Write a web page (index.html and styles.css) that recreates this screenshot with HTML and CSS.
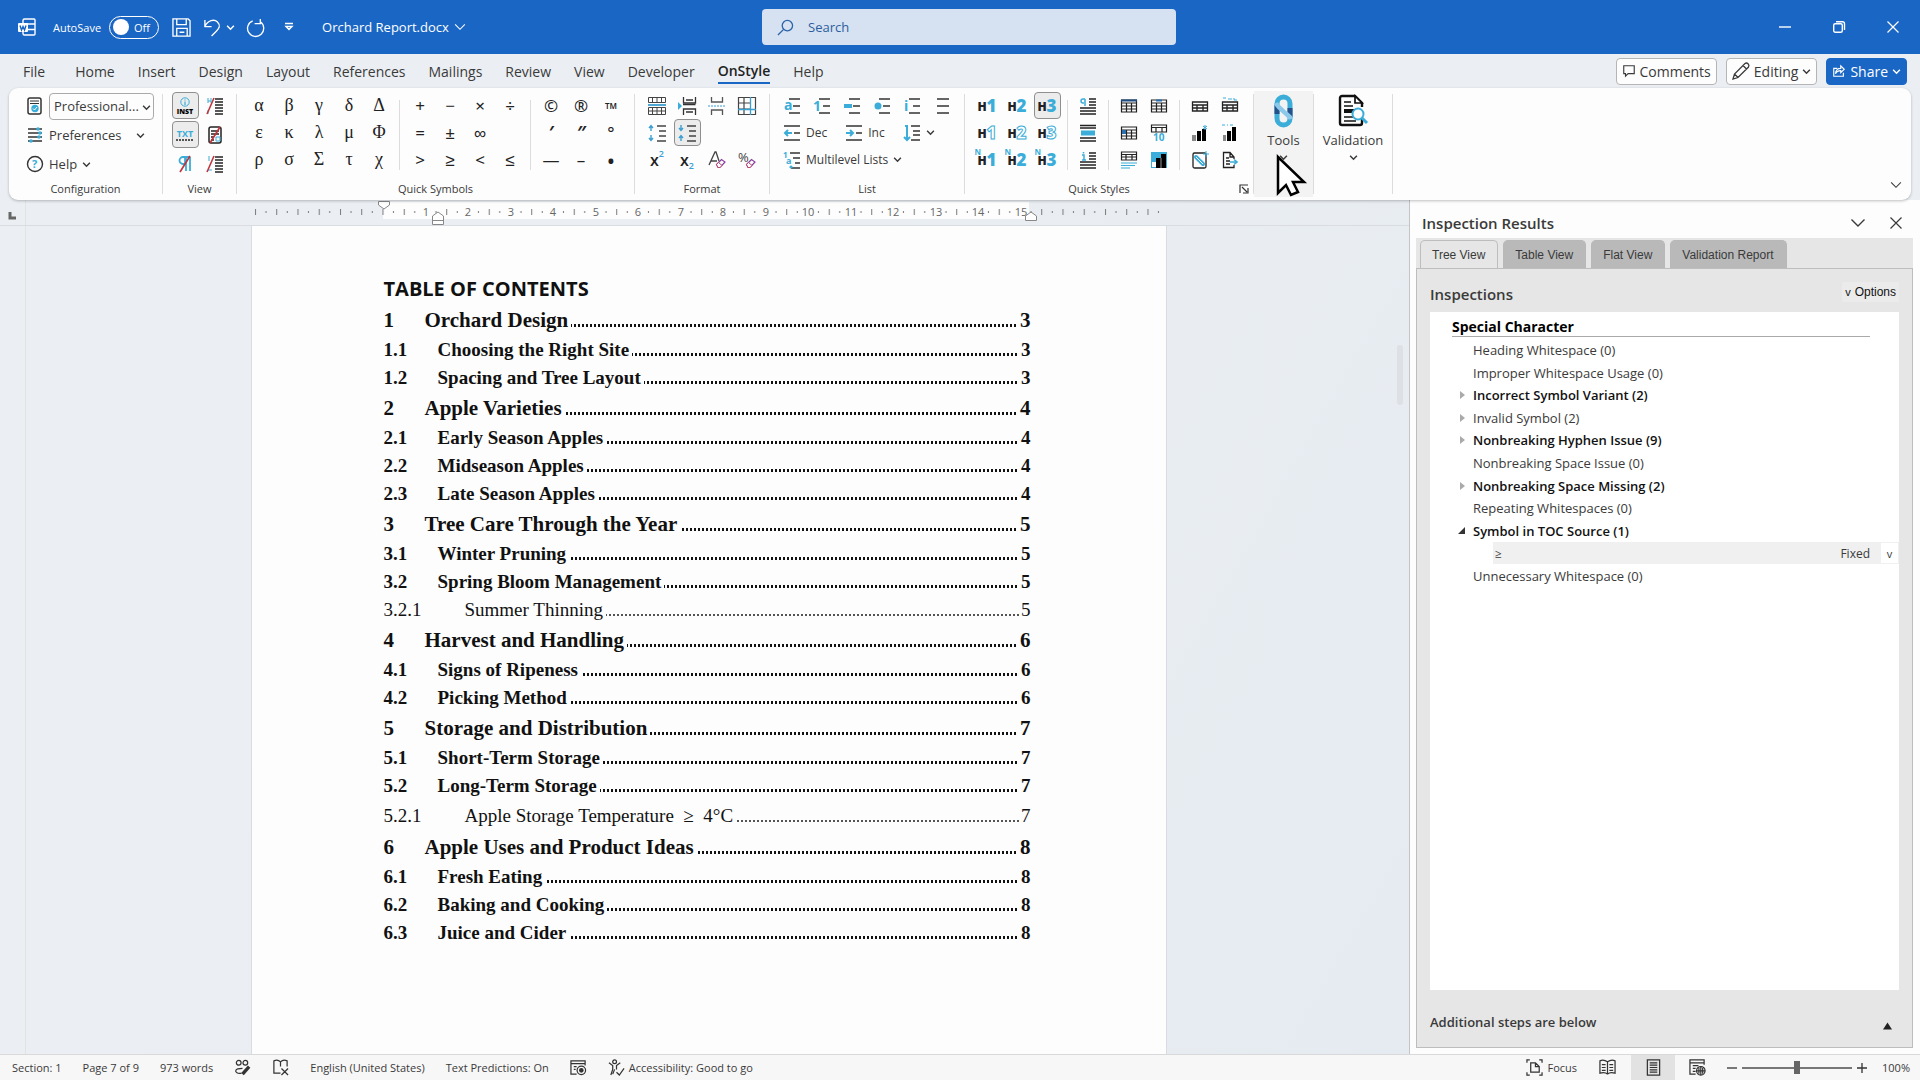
FILE: index.html
```
<!DOCTYPE html>
<html lang="en">

<head>
    <meta charset="UTF-8">
    <meta name="viewport" content="width=device-width, initial-scale=1.0">
    <title>Orchard Report.docx</title>
    <link rel="stylesheet" href="styles.css">
</head>

<body>
    <!-- shared icons -->
    <svg class="defs" aria-hidden="true">
        <symbol id="chev" viewBox="0 0 8 8"><path d="M1 2.5l3 3 3-3" fill="none" stroke="currentColor" stroke-width="1.3"/></symbol>
        <symbol id="chev-lg" viewBox="0 0 16 16"><path d="M1.500 4.500l6.500 6.500 6.500-6.500" fill="none" stroke="currentColor" stroke-width="1.400"/></symbol>
        <symbol id="close" viewBox="0 0 12 12"><path d="M.5.5l11 11M11.500.5l-11 11" fill="none" stroke="currentColor" stroke-width="1.200"/></symbol>
        <symbol id="para-lines" viewBox="0 0 18 18"><path d="M9 2h8M9 5h8M9 8h8M9 11h8M9 14h8M9 17h8" stroke="#222" stroke-width="1.500"/></symbol>
        <symbol id="list-lines" viewBox="0 0 18 18"><path d="M6 2h11M10 9h7M6 16h11" stroke="#333" stroke-width="1.500"/></symbol>
        <symbol id="tbl" viewBox="0 0 18 18"><path d="M1.500 3h15v12h-15zM1.500 6h15M1.500 9h15M1.500 12h15M6.500 6v9M11.500 6v9" fill="none" stroke="#222" stroke-width="1.200"/></symbol>
        <symbol id="eraser" viewBox="0 0 18 18"><path d="M8.500 13.500l5-5 3.500 2.500-5 5.500H10z" fill="#fff" stroke="#8a3f9e" stroke-width="1.200"/><path d="M8.500 13.500L10 16.500h2l2-2-3.500-3z" fill="#fff" stroke="#c0456b"/></symbol>
    </svg>

    <header class="titlebar">
        <div class="quick-access">
            <svg class="word" viewBox="0 0 18 18" fill="none" stroke="#fff" stroke-width="1.300"><path d="M5 5V2.500A1.500 1.500 0 016.500 1H16a1 1 0 011 1v14a1 1 0 01-1 1H6.500A1.500 1.500 0 015 15.500V14M8 6h9M10 11.500h7"/><rect x="0" y="5" width="10" height="9" rx="1" fill="#fff" stroke="none"/><path d="M2 7.500l1.500 4.500L5 8.500 6.500 12 8 7.500" fill="none" stroke="#1a66c4"/></svg>
            <label class="autosave">AutoSave
                <span class="toggle"><input type="checkbox"><i></i><span>Off</span></span>
            </label>
            <button class="tb-btn" aria-label="Save"><svg viewBox="0 0 20 20"><path d="M1 1h16l2 2v16H1zM5 1v6h10V1M5 19v-8h11v8M8 15h5"/></svg></button>
            <button class="tb-btn undo" aria-label="Undo"><svg viewBox="0 0 20 20"><path d="M2 2v7h7M2 9c3-7 10-8 13-5 4 4 2 7-1 10l-5 5"/></svg><svg class="c8"><use href="#chev"/></svg></button>
            <button class="tb-btn" aria-label="Redo"><svg viewBox="0 0 20 20"><path d="M14 1v5h-6M14 4a8.500 8.500 0 11-8-1"/></svg></button>
            <button class="tb-btn customize" aria-label="Customize"><svg viewBox="0 0 10 10"><path d="M1 1.500h8M2 4.500l3 3 3-3z"/></svg></button>
            <button class="doc-name">Orchard Report.docx <svg class="c12"><use href="#chev-lg"/></svg></button>
        </div>
        <div class="search">
            <svg viewBox="0 0 18 18"><circle cx="11" cy="7" r="5.500"/><path d="M7 11L1 17"/></svg>
            <input type="text" placeholder="Search" aria-label="Search">
        </div>
        <div class="window-btns">
            <button aria-label="Minimize"><svg viewBox="0 0 12 12"><path d="M0 6h12"/></svg></button>
            <button aria-label="Restore"><svg viewBox="0 0 12 12"><rect x=".7" y="2.700" width="8.600" height="8.600" rx="1.500"/><path d="M3 .7h6.500a2 2 0 012 2V9"/></svg></button>
            <button aria-label="Close"><svg><use href="#close"/></svg></button>
        </div>
    </header>

    <nav class="tabs">
        <button class="file">File</button>
        <button>Home</button>
        <button>Insert</button>
        <button>Design</button>
        <button>Layout</button>
        <button>References</button>
        <button>Mailings</button>
        <button>Review</button>
        <button>View</button>
        <button>Developer</button>
        <button class="active">OnStyle</button>
        <button>Help</button>
        <div class="tab-actions">
            <button class="pill"><svg viewBox="0 0 16 16"><path d="M2 2h12v9H7l-3 3v-3H2z"/></svg>Comments</button>
            <button class="pill"><svg class="pen" viewBox="0 0 18 18"><path d="M1 17l1.500-5L13 1.500c2-1.500 5 1 3.500 3.500L6 15.500zM11 3.500L14.500 7M2.500 12L6 15.500"/></svg>Editing <svg class="c8"><use href="#chev"/></svg></button>
            <button class="pill share"><svg viewBox="0 0 16 16"><path d="M6 5H2v9h11v-4M4 11c0-4 3-6 6-6V2l4 4-4 4V7.500C7 7.500 5 9 4 11z"/></svg>Share <svg class="c8"><use href="#chev"/></svg></button>
        </div>
    </nav>

    <section class="ribbon">
        <div class="group config">
            <div class="body">
                <div class="line"><svg class="i18" viewBox="0 0 18 18"><rect x="2" y="1" width="13" height="16" rx="2" fill="none" stroke="#333" stroke-width="1.500"/><path d="M4 4h9M4 6.500h9" stroke="#333"/><circle cx="9" cy="11.500" r="3.700" fill="#3badd8"/><path d="M7 11.500l1.500 1.500 2.500-3" fill="none" stroke="#fff"/></svg>
                    <span class="combo"><select aria-label="Configuration"><option>Professional...</option></select><svg class="c8"><use href="#chev"/></svg></span></div>
                <button class="line pref"><svg class="i18" viewBox="0 0 18 18"><path d="M2 3h14M2 7h14M2 11h14M2 15h14" stroke="#333" stroke-width="1.300"/><g fill="#3badd8"><circle cx="12" cy="3" r="1.800"/><circle cx="14" cy="7" r="1.800"/><circle cx="13" cy="11" r="1.800"/><circle cx="5" cy="15" r="1.800"/></g></svg>Preferences <svg class="c8"><use href="#chev"/></svg></button>
                <button class="line"><svg class="i18" viewBox="0 0 18 18"><circle cx="9" cy="9" r="7.500" fill="none" stroke="#333" stroke-width="1.400"/><text x="6" y="13" font-size="11" font-weight="700" fill="#3badd8">?</text></svg>Help <svg class="c8"><use href="#chev"/></svg></button>
            </div>
            <h2>Configuration</h2>
        </div>
        <div class="sep"></div>
        <div class="group view">
            <div class="body grid cols2">
                <button class="on" aria-label="Instructions"><svg viewBox="0 0 18 18"><circle cx="9" cy="5" r="4.200" fill="none" stroke="#3badd8"/><path d="M9 4.500V8M9 2.500v1" stroke="#3badd8" stroke-width="1.200"/><text x="9" y="17" font-size="7" font-weight="800" text-anchor="middle">INST</text></svg></button>
                <button aria-label="Heading marks"><svg viewBox="0 0 18 18"><use href="#para-lines"/><path d="M2 1v5M5 1v5M2 4h3M2 13v4" stroke="#3badd8"/><path d="M8 1L1 17" stroke="#c0323c" stroke-width="1.600"/></svg></button>
                <button class="on" aria-label="Text"><svg viewBox="0 0 18 18"><text x="9" y="11" font-size="9" font-weight="700" fill="#3badd8" text-anchor="middle">TXT</text><path d="M0 14h18" stroke="#222" stroke-width="1.500" stroke-dasharray="2 1"/></svg></button>
                <button aria-label="Fields"><svg viewBox="0 0 18 18"><rect x="3" y="1" width="12" height="16" rx="2" fill="none" stroke="#222" stroke-width="1.500"/><path d="M5 5h8M5 8h8M5 11h3M5 14h3" stroke="#222" stroke-width="1.300"/><path d="M10 11h4v4h-4z" fill="none" stroke="#3badd8"/><path d="M14 1L4 17" stroke="#c0323c" stroke-width="1.600"/></svg></button>
                <button aria-label="Paragraph marks"><svg viewBox="0 0 18 18"><path d="M14 2H7a3.500 3.500 0 000 7h2V2M10 2v14M14 2v14" fill="none" stroke="#3badd8" stroke-width="1.800"/><path d="M14 1L4 17" stroke="#c0323c" stroke-width="1.600"/></svg></button>
                <button aria-label="Numbering marks"><svg viewBox="0 0 18 18"><use href="#para-lines"/><path d="M3 1v5M2 15h4" stroke="#3badd8"/><path d="M8 1L1 17" stroke="#c0323c" stroke-width="1.600"/></svg></button>
            </div>
            <h2>View</h2>
        </div>
        <div class="sep"></div>
        <div class="group symbols">
            <div class="body">
                <div class="grid cols5 greek">
                    <button>α</button><button>β</button><button>γ</button><button>δ</button><button>Δ</button>
                    <button>ε</button><button>κ</button><button>λ</button><button>μ</button><button>Φ</button>
                    <button>ρ</button><button>σ</button><button>Σ</button><button>τ</button><button>χ</button>
                </div>
                <div class="sep short"></div>
                <div class="grid cols4 ops">
                    <button>+</button><button>−</button><button>×</button><button>÷</button>
                    <button>=</button><button>±</button><button>∞</button><i></i>
                    <button>&gt;</button><button>≥</button><button>&lt;</button><button>≤</button>
                </div>
                <div class="sep short"></div>
                <div class="grid cols3 ops">
                    <button>©</button><button>®</button><button class="tm">TM</button>
                    <button class="prime">′</button><button class="prime">″</button><button>°</button>
                    <button>—</button><button>–</button><button class="bullet">•</button>
                </div>
            </div>
            <h2>Quick Symbols</h2>
        </div>
        <div class="sep"></div>
        <div class="group format">
            <div class="body grid cols4">
                <button aria-label="Table rows"><svg viewBox="0 0 18 18" fill="none" stroke="#444"><path d="M.5.5h17v5H.5zM.5 10.500h17v7H.5zM.5 14h17M4.500.5v5M9 .5v5M13.500.5v5M4.500 10.500v7M9 10.500v7M13.500 10.500v7"/><path d="M0 8h18" stroke="#3b9fd0" stroke-width="1.800"/></svg></button>
                <button aria-label="Keep with next"><svg viewBox="0 0 18 18" fill="none" stroke="#333"><path d="M5.500 0v6h12V0M5.500 18v-6h12v6M8 3h7M8 15h7" stroke-width="1.300"/><path d="M5 7.500h12.500" stroke-width="1.500"/><path d="M0 5v8l4-4z" fill="#3badd8" stroke="none"/></svg></button>
                <button aria-label="Page break"><svg viewBox="0 0 18 18" fill="none" stroke="#555"><path d="M3.500 0v5h11V0M3.500 18v-5h11v5" stroke-width="1.300"/><path d="M0 9h18" stroke="#3b9fd0" stroke-dasharray="2 1"/></svg></button>
                <button aria-label="Table borders"><svg viewBox="0 0 18 18" fill="none" stroke="#444"><path d="M.5.5h17v17H.5zM6 .5v17M.5 6h12M.5 12h12" stroke-width="1.200"/><path d="M12.500 0v18M0 12.500h18" stroke="#3b9fd0" stroke-width="1.300"/></svg></button>
                <button aria-label="Increase spacing"><svg viewBox="0 0 18 18" fill="none"><path d="M9 2h9M11 7h7M11 12h7M9 17h9" stroke="#444" stroke-width="1.400"/><path d="M3 7V2M1 4l2-2.500L5 4M3 11v5M1 14l2 2.500L5 14" stroke="#3b9fd0" stroke-width="1.400"/></svg></button>
                <button class="on" aria-label="Decrease spacing"><svg viewBox="0 0 18 18" fill="none"><path d="M9 2h9M11 7h7M11 12h7M9 17h9" stroke="#444" stroke-width="1.400"/><path d="M3 1v5M1 4l2 2.500L5 4M3 17v-5M1 14l2-2.500L5 14" stroke="#3b9fd0" stroke-width="1.400"/></svg></button>
                <i></i><i></i>
                <button class="script">x<sup>2</sup></button>
                <button class="script">x<sub>2</sub></button>
                <button aria-label="Clear formatting"><svg viewBox="0 0 18 18"><path d="M1 14L7 1h1l3 9M3 10h6" fill="none" stroke="#444" stroke-width="1.300"/><use href="#eraser"/></svg></button>
                <button aria-label="Clear percent"><svg viewBox="0 0 18 18"><text x="0" y="11" font-size="13" fill="#444">%</text><use href="#eraser"/></svg></button>
            </div>
            <h2>Format</h2>
        </div>
        <div class="sep"></div>
        <div class="group list">
            <div class="body">
                <div class="grid cols6">
                    <button aria-label="Letter list"><svg viewBox="0 0 18 18"><use href="#list-lines"/><text x="1" y="13" font-size="14" font-weight="700" fill="#3badd8">a</text></svg></button>
                    <button aria-label="Number list"><svg viewBox="0 0 18 18"><use href="#list-lines"/><text x="0" y="14" font-size="14" font-weight="700" fill="#3badd8">1</text></svg></button>
                    <button aria-label="Dash list"><svg viewBox="0 0 18 18"><use href="#list-lines"/><path d="M1 9h8" stroke="#3badd8" stroke-width="4"/></svg></button>
                    <button aria-label="Bullet list"><svg viewBox="0 0 18 18"><use href="#list-lines"/><circle cx="5" cy="9" r="3.500" fill="#3badd8"/></svg></button>
                    <button aria-label="Roman list"><svg viewBox="0 0 18 18"><use href="#list-lines"/><text x="1" y="14" font-size="14" font-weight="700" fill="#3badd8">i</text></svg></button>
                    <button aria-label="Plain list"><svg viewBox="0 0 18 18"><path d="M4 2h12M4 9h12M4 16h12" stroke="#333" stroke-width="1.500"/></svg></button>
                </div>
                <div class="row">
                    <button><svg viewBox="0 0 18 18"><path d="M1 2h16M11 9h6M1 16h16" stroke="#333" stroke-width="1.500"/><path d="M9 9H2M5 6L2 9l3 3" fill="none" stroke="#3badd8" stroke-width="2"/></svg>Dec</button>
                    <button><svg viewBox="0 0 18 18"><path d="M1 2h16M11 9h6M1 16h16" stroke="#333" stroke-width="1.500"/><path d="M1 9h7M5 6l3 3-3 3" fill="none" stroke="#3badd8" stroke-width="2"/></svg>Inc</button>
                    <button aria-label="Restart numbering"><svg viewBox="0 0 18 18"><path d="M8 2h9M10 7h7M10 11h7M8 16h9" stroke="#333" stroke-width="1.500"/><path d="M2 2h2v14M1 13l3 3 3-3" fill="none" stroke="#3badd8" stroke-width="2"/></svg> <svg class="c8"><use href="#chev"/></svg></button>
                </div>
                <div class="row">
                    <button><svg viewBox="0 0 18 18"><path d="M7 2h10M10 7h7M12 12h5M8 17h9" stroke="#333" stroke-width="1.400"/><text x="0" y="7" font-size="8" font-weight="700" fill="#3badd8">1</text><text x="3" y="13" font-size="9" font-weight="700" fill="#3badd8">a</text><circle cx="8" cy="16" r="1.600" fill="#3badd8"/></svg>Multilevel Lists <svg class="c8"><use href="#chev"/></svg></button>
                </div>
            </div>
            <h2>List</h2>
        </div>
        <div class="sep"></div>
        <div class="group styles">
            <div class="body">
                <div class="grid cols3 heads">
                    <button><b>H</b><em>1</em></button><button><b>H</b><em>2</em></button><button class="on"><b>H</b><em>3</em></button>
                    <button class="outline"><b>H</b><em>1</em></button><button class="outline"><b>H</b><em>2</em></button><button class="outline"><b>H</b><em>3</em></button>
                    <button class="num"><b>H</b><em>1</em></button><button class="num"><b>H</b><em>2</em></button><button class="num"><b>H</b><em>3</em></button>
                </div>
                <div class="sep short"></div>
                <div class="grid">
                    <button aria-label="Body text"><svg viewBox="0 0 18 18"><path d="M10 2h7M10 5h7M10 8h7M1 11h16M1 14h16M1 17h16" stroke="#222" stroke-width="1.400"/><path d="M6 2H4a2 2 0 000 4h1M6 2v7" fill="none" stroke="#3badd8" stroke-width="1.500"/></svg></button>
                    <button aria-label="Block text"><svg viewBox="0 0 18 18"><path d="M1 1.500h16M1 4h16M1 14h16M1 17h16" stroke="#222" stroke-width="1.400"/><path d="M2 9h14" stroke="#3badd8" stroke-width="5"/></svg></button>
                    <button aria-label="Instruction text"><svg viewBox="0 0 18 18"><path d="M10 2h7M10 5h7M10 8h7M1 11h16M1 14h16M1 17h16" stroke="#222" stroke-width="1.400"/><path d="M3 4h2v5M3 9h4M4.500 1v1.500" fill="none" stroke="#3badd8" stroke-width="1.500"/></svg></button>
                </div>
                <div class="sep short"></div>
                <div class="grid cols2">
                    <button aria-label="Table header"><svg viewBox="0 0 18 18"><use href="#tbl"/><path d="M1 3.500h16" stroke="#1c4b82" stroke-width="2"/></svg></button>
                    <button aria-label="Table column header"><svg viewBox="0 0 18 18"><use href="#tbl"/><path d="M6 3.500h6" stroke="#2a6fb0" stroke-width="2"/></svg></button>
                    <button aria-label="Table cell"><svg viewBox="0 0 18 18"><use href="#tbl"/><path d="M2 8h4" stroke="#2a6fb0" stroke-width="4"/></svg></button>
                    <button aria-label="Table size"><svg viewBox="0 0 18 18"><path d="M1.500 1h15v7h-15zM1.500 3.500h15M6 3.500V8M12 3.500V8" fill="none" stroke="#222" stroke-width="1.200"/><text x="3" y="17" font-size="10" font-weight="700" fill="#3badd8">10</text></svg></button>
                    <button aria-label="Table note"><svg viewBox="0 0 18 18"><path d="M1.500 1h15v8h-15zM1.500 3.500h15M1.500 6h15M6 3.500V9M12 3.500V9" fill="none" stroke="#222" stroke-width="1.200"/><path d="M1 12h16M1 14.500h14M1 17h9" stroke="#3badd8" stroke-width="1.200"/></svg></button>
                    <button aria-label="Figure"><svg viewBox="0 0 18 18"><path d="M1 1h16v16H1z" fill="#3badd8"/><path d="M2 11h4v5H2z" fill="#fff"/><path d="M6 7h5v10H6zM11 3h5v14h-5z" fill="#000"/><path d="M11 7v10" stroke="#fff" stroke-width=".6"/></svg></button>
                </div>
                <div class="sep short"></div>
                <div class="grid cols2">
                    <button aria-label="Table caption"><svg viewBox="0 0 18 18"><path d="M1.500 5h15v9h-15zM1.500 8h15M1.500 11h15M6 8v6M12 8v6" fill="none" stroke="#222" stroke-width="1.300"/></svg></button>
                    <button aria-label="Table title"><svg viewBox="0 0 18 18"><path d="M1.500 5h15v9h-15zM1.500 8h15M1.500 11h15M6 8v6M12 8v6" fill="none" stroke="#222" stroke-width="1.300"/><path d="M2 1h3M7 2h4M13 1v2h3" stroke="#3badd8" fill="none"/></svg></button>
                    <button aria-label="Figure caption"><svg viewBox="0 0 18 18"><path d="M1 11h4v6H1z" fill="#888"/><path d="M6 7h4v10H6zM11 5h4v12h-4z"/><path d="M14 1v5M12 2l4 3M16 2l-4 3" stroke="#3badd8"/></svg></button>
                    <button aria-label="Figure title"><svg viewBox="0 0 18 18"><path d="M2 11h3v6H2z" fill="#888"/><path d="M6 7h4v10H6zM11 3h4v14h-4z"/><path d="M1 1h3M6 1h1M9 1h3" stroke="#3badd8"/></svg></button>
                    <button aria-label="Linked caption"><svg viewBox="0 0 18 18"><rect x="2" y="2" width="13" height="15" rx="1.500" fill="none" stroke="#222" stroke-width="1.300"/><path d="M5 6l3 3M9 10l3 3" stroke="#3badd8" stroke-width="4" stroke-linecap="round"/><path d="M5 6l7 7" stroke="#fff"/><path d="M15 0v6M12 3h6" stroke="#3badd8"/></svg></button>
                    <button aria-label="Export"><svg viewBox="0 0 18 18"><path d="M13 8V6L9 1.500H2.500v15H13V14M9 1.500V6h4M5 7h3M5 10h4M5 13h4" fill="none" stroke="#222" stroke-width="1.300"/><path d="M9 11h7M13 8.500l3 2.500-3 2.500" fill="none" stroke="#3badd8" stroke-width="1.600"/></svg></button>
                </div>
            </div>
            <h2>Quick Styles</h2>
            <button class="launcher" aria-label="Quick Styles options"><svg viewBox="0 0 10 10"><path d="M1 9V1h8M3 3l5 5M9 4v5H4" fill="none" stroke="#333" stroke-width="1.200"/></svg></button>
        </div>
        <div class="sep"></div>
        <div class="tools-wrap">
            <button class="big hover"><svg viewBox="0 0 34 34"><rect x="10" y="3" width="13" height="28" rx="6.500" fill="none" stroke="#3badd8" stroke-width="5"/><path d="M10 20v-9M23 14v9" stroke="#26508a" stroke-width="5"/><path d="M9 9c1 3 4 5 7.500 8.500S23 22 24 25" fill="none" stroke="#8cc8ea" stroke-width="4.500"/></svg>Tools<svg class="c8"><use href="#chev"/></svg></button>
            <svg class="pointer" viewBox="0 0 30 42"><path d="M2 2v36l8-8 5 10 7-3-5-10h11z" fill="#fff" stroke="#000" stroke-width="2.500"/></svg>
        </div>
        <div class="sep"></div>
        <button class="big validation"><svg viewBox="0 0 34 34"><path d="M26 13v-4L19 2H6a2 2 0 00-2 2v25a2 2 0 002 2h18a2 2 0 002-2v-4" fill="none" stroke="#111" stroke-width="2.400"/><path d="M19 2v7h7zM8 8h7M8 12h9M8 23h10M8 27h12" fill="#fff" stroke="#111" stroke-width="1.700"/><path d="M8 17h10" stroke="#111" stroke-width="4"/><circle cx="22" cy="20" r="5.500" fill="#fff" stroke="#3badd8" stroke-width="2"/><path d="M26 24l5 5" stroke="#3badd8" stroke-width="3"/></svg>Validation<svg class="c8"><use href="#chev"/></svg></button>
        <div class="sep"></div>
        <button class="collapse" aria-label="Collapse ribbon"><svg class="c12"><use href="#chev-lg"/></svg></button>
    </section>

    <main>
        <div class="document">
            <div class="ruler">
                <div class="corner"><svg viewBox="0 0 8 8"><path d="M2 0v6h6" fill="none" stroke="#666" stroke-width="3"/></svg></div>
                <svg class="scale" viewBox="0 0 916 25">
                    <defs>
                        <pattern id="ticks" x="3" width="21.250" height="25" patternUnits="userSpaceOnUse"><path d="M1.500 9v6" stroke="#777"/><path d="M12 11v2" stroke="#777"/></pattern>
                    </defs>
                    <rect x="132" y="2" width="646" height="17" fill="#fdfdfd"/>
                    <rect x="3" y="0" width="907" height="25" fill="url(#ticks)"/>
                    <g id="numbers"></g>
                    <g fill="#fff" stroke="#888"><path d="M127.500 1.500h11V5l-5.500 4-5.500-4z"/><path d="M181.500 24.500h11V16l-5.500-4-5.500 4zM181.500 20.500h11"/><path d="M774.500 20.500h11V16l-5.500-4-5.500 4z"/></g>
                </svg>
            </div>
            <div class="canvas">
                <div class="page">
                    <h1>TABLE OF CONTENTS</h1>
                    <ol class="toc" id="toc"></ol>
                </div>
                <div class="scrollbar"><i></i></div>
            </div>
        </div>

        <aside class="pane">
            <div class="pane-head">
                <h2>Inspection Results</h2>
                <button aria-label="Pane options"><svg class="c16"><use href="#chev-lg"/></svg></button>
                <button aria-label="Close pane"><svg class="c12"><use href="#close"/></svg></button>
            </div>
            <div class="pane-tabs">
                <button class="current">Tree View</button>
                <button>Table View</button>
                <button>Flat View</button>
                <button>Validation Report</button>
            </div>
            <div class="pane-body">
                <div class="pane-title">
                    <h3>Inspections</h3>
                    <button class="options"><small>v</small> Options</button>
                </div>
                <div class="tree">
                    <h4>Special Character</h4>
                    <ul>
                        <li>Heading Whitespace (0)</li>
                        <li>Improper Whitespace Usage (0)</li>
                        <li class="closed issue">Incorrect Symbol Variant (2)</li>
                        <li class="closed">Invalid Symbol (2)</li>
                        <li class="closed issue">Nonbreaking Hyphen Issue (9)</li>
                        <li>Nonbreaking Space Issue (0)</li>
                        <li class="closed issue">Nonbreaking Space Missing (2)</li>
                        <li>Repeating Whitespaces (0)</li>
                        <li class="open issue">Symbol in TOC Source (1)</li>
                        <li class="result"><span>≥</span><span>Fixed</span><button aria-label="Result actions">v</button></li>
                        <li>Unnecessary Whitespace (0)</li>
                    </ul>
                </div>
                <div class="pane-foot">Additional steps are below
                    <button aria-label="Expand steps"><svg viewBox="0 0 10 8"><path d="M0 8l5-8 5 8z" fill="#222"/></svg></button>
                </div>
            </div>
        </aside>
    </main>

    <footer class="status">
        <button>Section: 1</button>
        <button>Page 7 of 9</button>
        <button>973 words</button>
        <button aria-label="Track changes"><svg viewBox="0 0 18 18"><circle cx="5" cy="4" r="2.500"/><circle cx="12" cy="4" r="2.500"/><path d="M8 15c-4 1-7-1-6-3 1-2 4-2 7-2"/><path d="M16 8l-7 8" stroke-width="3.500"/></svg></button>
        <button aria-label="Proofing"><svg viewBox="0 0 18 18"><path d="M9 3v5M9 3C7 1 4 1 2 2v13h7M9 3c2-2 5-2 7-1v6M10 10l7 7M17 10l-7 7"/></svg></button>
        <button>English (United States)</button>
        <button>Text Predictions: On</button>
        <button aria-label="Macro"><svg viewBox="0 0 18 18"><path d="M7 16H1V2h15v5M1 5h15M4 8h3M4 11h2"/><circle cx="12" cy="12" r="4.500"/><circle cx="12" cy="12" r="1.800" fill="#333"/></svg></button>
        <button class="a11y"><svg viewBox="0 0 18 18"><circle cx="7" cy="3" r="2"/><path d="M1 4l4 3v4l-2 6M13 4L9 7v4M5 16l2-5M9 14l3 3 5-7"/></svg>Accessibility: Good to go</button>
        <div class="view-tools">
            <button class="focus"><svg viewBox="0 0 18 18"><path d="M1 4V1h3M14 1h3v3M1 14v3h3M14 17h3v-3M5 4h5l4 4v6H5zM10 4v4h4"/></svg>Focus</button>
            <button aria-label="Read mode"><svg viewBox="0 0 18 18"><path d="M9 3v13M9 3C6 1 3 1 1 2v13c3-1 6-1 8 1M9 3c3-2 6-2 8-1v13c-3-1-6-1-8 1M3 6h4M3 9h4M3 12h4M11 6h4M11 9h4M11 12h4"/></svg></button>
            <button class="sel" aria-label="Print layout"><svg viewBox="0 0 18 18"><path d="M2.500 1h13v16h-13zM5 4h8M5 6.500h8M5 9h8M5 11.500h8M5 14h8"/></svg></button>
            <button aria-label="Web layout"><svg viewBox="0 0 18 18"><path d="M7 16H1V1h15v5M1 4h15M4 7h6M4 10h3M4 13h3"/><circle cx="12.500" cy="12.500" r="4.500"/><path d="M8 12.500h9M12.500 8v9M10.500 9.500v6M14.500 9.500v6"/></svg></button>
            <button class="zoom" aria-label="Zoom out"><svg viewBox="0 0 10 10"><path d="M0 5h10"/></svg></button>
            <input type="range" min="10" max="190" value="100" aria-label="Zoom">
            <button class="zoom" aria-label="Zoom in"><svg viewBox="0 0 10 10"><path d="M0 5h10M5 0v10"/></svg></button>
            <button class="percent">100%</button>
        </div>
    </footer>

    <script>
        // number, title, page
        const entries = [
            ["1", "Orchard Design", 3],
            ["1.1", "Choosing the Right Site", 3],
            ["1.2", "Spacing and Tree Layout", 3],
            ["2", "Apple Varieties", 4],
            ["2.1", "Early Season Apples", 4],
            ["2.2", "Midseason Apples", 4],
            ["2.3", "Late Season Apples", 4],
            ["3", "Tree Care Through the Year", 5],
            ["3.1", "Winter Pruning", 5],
            ["3.2", "Spring Bloom Management", 5],
            ["3.2.1", "Summer Thinning", 5],
            ["4", "Harvest and Handling", 6],
            ["4.1", "Signs of Ripeness", 6],
            ["4.2", "Picking Method", 6],
            ["5", "Storage and Distribution", 7],
            ["5.1", "Short-Term Storage", 7],
            ["5.2", "Long-Term Storage", 7],
            ["5.2.1", "Apple Storage Temperature \u00a0≥ \u00a04°C", 7],
            ["6", "Apple Uses and Product Ideas", 8],
            ["6.1", "Fresh Eating", 8],
            ["6.2", "Baking and Cooking", 8],
            ["6.3", "Juice and Cider", 8]
        ];

        document.getElementById("toc").innerHTML = entries.map(([num, title, page]) => {
            const level = num.split(".").length;
            const tall = title.includes("≥") ? " tall" : "";
            return `<li><a href="#" class="level${level}${tall}"><span class="no">${num}</span><span>${title}</span><i class="leader"></i><span>${page}</span></a></li>`;
        }).join("");

        // ruler centimetres
        let labels = "";
        for (let cm = 1; cm <= 15; cm++) {
            const x = Math.round(132 + cm * 42.5);
            labels += `<rect x="${x - 8}" y="6" width="15" height="12" fill="#fdfdfd"/><text x="${x}" y="16" text-anchor="middle">${cm}</text>`;
        }
        document.getElementById("numbers").innerHTML = labels;
    </script>
</body>

</html>
```
FILE: styles.css
```
:root {
    --blue: #1a66c4;
    --cyan: #3badd8;
    --chrome: #ebeff3;
    --text: #3a3a3a;
}

* {
    box-sizing: border-box;
}

body {
    margin: 0;
    height: 100vh;
    display: flex;
    flex-direction: column;
    overflow: hidden;
    background: var(--chrome);
    color: var(--text);
    font-family: "Open Sans", "Noto Sans", sans-serif;
    font-size: 12px;
}

button,
input,
select {
    font: inherit;
    color: inherit;
    background: none;
    border: none;
    margin: 0;
    padding: 0;
}

button {
    display: flex;
    align-items: center;
    white-space: nowrap;
}

svg {
    flex: none;
    overflow: visible;
}

h1,
h2,
h3,
h4,
ul,
ol {
    margin: 0;
    padding: 0;
    list-style: none;
}

.defs {
    position: absolute;
    width: 0;
    height: 0;
}

.c8 {
    width: 9px;
    height: 9px;
}

.c12 {
    width: 12px;
    height: 12px;
}

.c16 {
    width: 16px;
    height: 16px;
}

.i18 {
    width: 18px;
    height: 18px;
}

/* title bar */
.titlebar {
    display: grid;
    grid-template-columns: 1fr 414px 1fr;
    align-items: center;
    height: 54px;
    padding-left: 18px;
    background: var(--blue);
    color: #fff;
}

.titlebar svg {
    fill: none;
    stroke: #fff;
    stroke-width: 1.4;
}

.quick-access {
    display: flex;
    align-items: center;
}

.word {
    width: 18px;
    height: 18px;
}

.autosave {
    display: flex;
    align-items: center;
    gap: 8px;
    margin: 0 13px 0 17px;
    font-size: 11px;
}

.toggle {
    position: relative;
    display: flex;
    align-items: center;
    width: 50px;
    height: 23px;
    border: 1px solid #fff;
    border-radius: 12px;
}

.toggle input {
    position: absolute;
    inset: 0;
    opacity: 0;
}

.toggle i {
    width: 16px;
    height: 16px;
    margin: 0 5px 0 3px;
    border-radius: 50%;
    background: #fff;
}

.tb-btn {
    margin-right: 12px;
}

.tb-btn svg {
    width: 19px;
    height: 19px;
}

.tb-btn .c8 {
    width: 9px;
    height: 9px;
    margin-left: 4px;
}

.tb-btn.customize {
    margin: 0 28px 0 6px;
}

.customize svg {
    width: 10px;
    height: 10px;
}

.doc-name {
    gap: 5px;
    font-size: 13px;
}

.search {
    display: flex;
    align-items: center;
    gap: 14px;
    height: 36px;
    padding-left: 15px;
    border-radius: 4px;
    background: #d6e1f1;
}

.search svg {
    width: 17px;
    height: 17px;
    stroke: #2b64a8;
}

.search input {
    flex: 1;
    font-size: 13px;
    outline: none;
}

.search input::placeholder {
    color: #2b5f9e;
    opacity: 1;
}

.window-btns {
    display: flex;
    justify-content: flex-end;
    gap: 42px;
    padding-right: 21px;
}

.window-btns svg {
    width: 12px;
    height: 12px;
}

/* tabs */
.tabs {
    display: flex;
    align-items: center;
    gap: 23px;
    height: 34px;
    padding: 0 13px 0 23px;
    font-size: 14px;
}

.tabs .file {
    margin-right: 7px;
}

.tabs .active {
    padding-top: 2px;
    font-weight: 600;
    line-height: 22px;
    border-bottom: 2px solid var(--blue);
    color: #222;
}

.tab-actions {
    display: flex;
    gap: 9px;
    margin-left: auto;
}

.pill {
    gap: 4px;
    height: 27px;
    padding: 0 5px;
    border: 1px solid #b5b5b5;
    border-radius: 4px;
    background: #fdfdfd;
}

.pill svg {
    width: 14px;
    height: 14px;
    fill: none;
    stroke: currentColor;
    stroke-width: 1.3;
}

.pill .pen {
    width: 18px;
    height: 18px;
}

.pill .c8 {
    width: 9px;
    height: 9px;
}

.pill.share {
    border-color: var(--blue);
    background: var(--blue);
    color: #fff;
}

/* ribbon */
.ribbon {
    position: relative;
    z-index: 1;
    display: flex;
    align-items: center;
    height: 112px;
    margin: 0 9px;
    border-radius: 9px;
    background: #fdfdfd;
    box-shadow: 0 1px 3px rgba(0, 0, 0, 0.25);
}

.sep {
    width: 1px;
    height: 100px;
    background: #dcdcdc;
}

.sep.short {
    height: 70px;
    margin: 8px 5px 0;
}

.group {
    position: relative;
    display: flex;
    flex-direction: column;
    height: 112px;
    padding: 4px 0 3px 7px;
}

.group h2 {
    margin: auto 0 0 -7px;
    text-align: center;
    font-size: 11px;
    font-weight: 400;
    line-height: 16px;
}

.group .body {
    display: flex;
}

.group .grid {
    display: grid;
    grid-template-columns: 30px;
    grid-auto-rows: 27px;
    justify-items: center;
    align-items: center;
}

.group .cols2 { grid-template-columns: repeat(2, 30px); }
.group .cols3 { grid-template-columns: repeat(3, 30px); }
.group .cols4 { grid-template-columns: repeat(4, 30px); }
.group .cols5 { grid-template-columns: repeat(5, 30px); }
.group .cols6 { grid-template-columns: repeat(6, 30px); }

.grid button {
    justify-content: center;
    width: 27px;
    height: 27px;
    border: 1px solid transparent;
    border-radius: 4px;
    color: #222;
}

.grid button svg {
    width: 18px;
    height: 18px;
}

.grid button.on {
    border-color: #8f8f8f;
    background: #ececec;
}

.config {
    width: 153px;
}

.config .body {
    flex-direction: column;
    gap: 1px;
    padding-left: 10px;
    font-size: 13px;
}

.line {
    display: flex;
    align-items: center;
    gap: 5px;
    height: 28px;
}

.pref .c8 {
    margin-left: 10px;
}

.combo {
    position: relative;
    width: 105px;
    height: 27px;
}

.combo select {
    appearance: none;
    width: 100%;
    height: 100%;
    padding-left: 4px;
    border: 1px solid #aaa;
    border-radius: 4px;
}

.combo .c8 {
    position: absolute;
    right: 3px;
    top: 10px;
}

.view {
    width: 73px;
}

.group.view .grid {
    grid-auto-rows: 29px;
    margin-top: -1px;
}

.symbols {
    width: 397px;
}

.greek button {
    font-family: "Liberation Serif", serif;
    font-size: 18px;
}

.ops button {
    font-family: "Noto Sans", sans-serif;
    font-size: 17px;
}

.ops .tm {
    font-size: 8px;
    font-weight: 600;
}

.ops .prime {
    font-style: italic;
    font-weight: 700;
}

.ops .bullet {
    font-size: 22px;
}

.format {
    width: 134px;
}

.grid .script {
    font-size: 16px;
    font-weight: 600;
}

.script sup,
.script sub {
    font-size: 9px;
    color: #3b9fd0;
}

.script sup {
    align-self: flex-start;
}

.script sub {
    align-self: flex-end;
}

.list {
    width: 194px;
}

.group.list .body {
    flex-direction: column;
}

.list .row {
    display: flex;
    gap: 18px;
    height: 27px;
    padding-left: 6px;
}

.list .row button {
    gap: 5px;
}

.list .row svg {
    width: 18px;
    height: 18px;
}

.list .row .c8 {
    width: 9px;
    height: 9px;
}

.styles {
    width: 288px;
}

.styles h2 {
    margin-right: 20px;
}

.heads b {
    font-size: 12px;
    font-weight: 800;
    margin-top: 2px;
}

.heads em {
    font-style: normal;
    font-size: 17px;
    font-weight: 800;
    color: var(--cyan);
}

.heads .outline em {
    color: #fff;
    -webkit-text-stroke: 1px var(--cyan);
}

.heads .num {
    position: relative;
}

.heads .num::before {
    content: "N";
    position: absolute;
    left: 0;
    top: -1px;
    font-size: 8px;
    font-weight: 700;
    color: var(--cyan);
}

.launcher {
    position: absolute;
    right: 4px;
    bottom: 6px;
}

.launcher svg {
    width: 10px;
    height: 10px;
}

.tools-wrap {
    position: relative;
}

.big {
    flex-direction: column;
    width: 59px;
    height: 106px;
    padding-top: 3px;
    font-size: 13px;
    line-height: 24px;
}

.big svg {
    width: 34px;
    height: 34px;
}

.big .c8 {
    width: 9px;
    height: 9px;
    margin-top: 1px;
}

.big.hover {
    background: #f3f3f3;
}

.big.validation {
    width: 78px;
}

.pointer {
    position: absolute;
    left: 22px;
    top: 64px;
    width: 30px;
    height: 42px;
}

.collapse {
    margin: auto 9px 9px auto;
}

/* document */
main {
    flex: 1;
    display: flex;
    min-height: 0;
}

.document {
    flex: 1;
    display: flex;
    flex-direction: column;
    padding-left: 26px;
    background: linear-gradient(to right, #e3e3e3 0 1px, transparent 1px) 25px 0 no-repeat, linear-gradient(120deg, #ebeff3 30%, #e6ebf1);
}

.ruler {
    display: flex;
    justify-content: center;
    height: 26px;
    margin-left: -26px;
    padding: 0 18px 0 0;
    border-bottom: 1px solid #d9dce0;
}

.corner {
    width: 26px;
    padding: 7px 0 0 8px;
}

.corner svg {
    width: 8px;
    height: 8px;
}

.scale {
    width: 916px;
    height: 25px;
    margin: 0 auto;
    font-size: 11px;
    fill: #666;
}

.canvas {
    flex: 1;
    display: flex;
    min-height: 0;
}

.page {
    width: 916px;
    margin: 0 auto;
    padding: 48px 135px 0 132px;
    background: #fdfdfd;
    border: solid #d8dce1;
    border-width: 0 1px;
    color: #111;
}

.page h1 {
    font-family: "Open Sans", sans-serif;
    font-size: 20px;
    font-weight: 700;
    line-height: 30px;
}

.toc {
    font-family: "Liberation Serif", serif;
    font-size: 19px;
    font-weight: 700;
}

.toc a {
    display: flex;
    align-items: baseline;
    line-height: 28px;
    color: inherit;
    text-decoration: none;
}

.toc .no {
    width: 54px;
}

.toc .level1 {
    font-size: 21px;
    line-height: 32px;
}

.level1 .no {
    width: 41px;
}

.toc .level3 {
    font-weight: 400;
}

.level3 .no {
    width: 81px;
}

.toc .tall {
    line-height: 31px;
}

.leader {
    flex: 1;
    height: 3px;
    margin: 0 4px 0 3px;
    background: repeating-linear-gradient(to left, #111 0 2px, transparent 2px 4px);
}

.level3 .leader {
    height: 2px;
    margin-right: 2px;
    background: repeating-linear-gradient(to left, #555 0 2px, transparent 2px 4px);
}

.scrollbar {
    width: 18px;
    padding: 119px 6px 0;
}

.scrollbar i {
    display: block;
    height: 60px;
    border-radius: 3px;
    background: #dde1e6;
}

/* inspection pane */
.pane {
    display: flex;
    flex-direction: column;
    width: 511px;
    padding: 0 7px 6px 6px;
    border-left: 1px solid #c4c4c4;
    background: #fdfdfd;
}

.pane-head {
    display: flex;
    align-items: center;
    gap: 24px;
    height: 38px;
    padding: 8px 11px 0 6px;
}

.pane-head h2 {
    flex: 1;
    font-size: 15px;
    font-weight: 600;
}

.pane-tabs {
    display: flex;
    gap: 5px;
    height: 30px;
    padding: 2px 5px 0 4px;
    background: #e6e6e6;
    font-family: "Liberation Sans", sans-serif;
}

.pane-tabs button {
    padding: 0 12px 0 11px;
    border: 1px solid #b8b8b8;
    border-bottom: none;
    border-radius: 5px 5px 0 0;
    background: #b9b9b9;
}

.pane-tabs .current {
    border-color: #bdbdbd;
    background: #e6e6e6;
}

.pane-body {
    flex: 1;
    display: flex;
    flex-direction: column;
    min-height: 0;
    padding: 0 13px;
    border: 1px solid #bdbdbd;
    background: #e6e6e6;
}

.pane-title {
    display: flex;
    align-items: center;
    justify-content: space-between;
    height: 43px;
    padding-top: 6px;
}

.pane-title h3 {
    font-size: 15px;
    font-weight: 600;
}

.options {
    gap: 4px;
    height: 20px;
    padding: 0 3px;
    margin-bottom: 3px;
    background: #ebebeb;
    font-family: "Liberation Sans", sans-serif;
    color: #111;
}

.options small {
    font-size: 11px;
}

.tree {
    flex: 1;
    padding-top: 6px;
    background: #fff;
    font-size: 13px;
}

.tree h4 {
    margin: 0 29px 2px 22px;
    border-bottom: 1px solid #aaa;
    font-size: 14px;
    line-height: 18px;
    color: #000;
}

.tree ul {
    display: grid;
    grid-auto-rows: 1fr;
    height: 248px;
    padding-left: 43px;
}

.tree li {
    position: relative;
    display: flex;
    align-items: center;
}

.issue {
    font-weight: 600;
    color: #111;
}

.closed::before,
.open::before {
    content: "";
    position: absolute;
    left: -13px;
    border: solid transparent;
    border-width: 4px 0 4px 5px;
    border-left-color: #aaa;
}

.tree .open::before {
    left: -15px;
    border-width: 0 0 7px 7px;
    border-left-color: transparent;
    border-bottom-color: #333;
}

.tree .result {
    gap: 11px;
    margin-left: 20px;
    padding: 0 1px 0 2px;
    background: #f0f0f0;
    font-size: 12px;
}

.result span:first-child {
    margin-right: auto;
}

.result button {
    justify-content: center;
    width: 17px;
    height: 20px;
    background: #fff;
    font-size: 11px;
}

.pane-foot {
    display: flex;
    align-items: center;
    justify-content: space-between;
    height: 57px;
    padding: 6px 7px 0 0;
    font-size: 13px;
    font-weight: 600;
}

.pane-foot svg {
    width: 9px;
    height: 8px;
    margin-top: 8px;
}

/* status bar */
.status {
    display: flex;
    align-items: center;
    gap: 21px;
    height: 26px;
    padding-left: 12px;
    border-top: 1px solid #d9d9d9;
    background: #f7f7f7;
    font-size: 11px;
}

.status svg {
    width: 17px;
    height: 17px;
    fill: none;
    stroke: #333;
    stroke-width: 1.3;
}

.a11y,
.focus {
    gap: 4px;
}

.view-tools {
    display: flex;
    align-items: center;
    height: 25px;
    margin-left: auto;
    padding-right: 10px;
}

.view-tools .sel {
    justify-content: center;
    width: 44px;
    height: 25px;
    margin: 0 14px 0 15px;
    background: #e2e2e2;
}

.focus {
    margin-right: 22px;
}

.zoom {
    margin: 0 5px;
}

.view-tools .zoom:nth-of-type(5) {
    margin-left: 21px;
}

.status .zoom svg {
    width: 10px;
    height: 10px;
}

.percent {
    margin-left: 10px;
}

input[type="range"] {
    appearance: none;
    width: 110px;
    height: 13px;
    background: linear-gradient(#777, #777) center / 100% 2px no-repeat;
}

input[type="range"]::-webkit-slider-thumb {
    appearance: none;
    width: 6px;
    height: 13px;
    background: #666;
}
```
